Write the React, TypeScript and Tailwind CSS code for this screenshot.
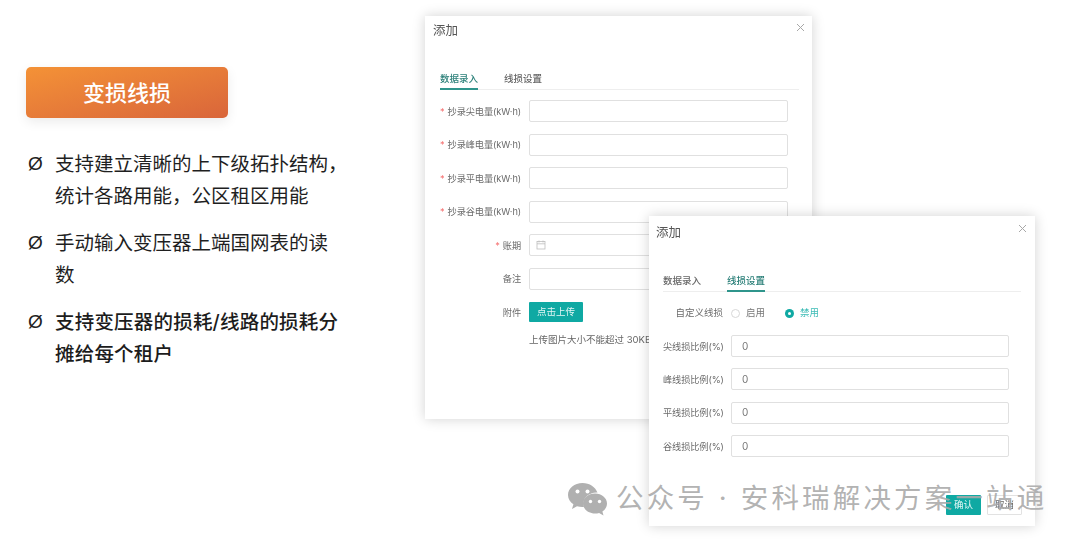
const cjk = "font-['Inter','Noto_Sans_CJK_SC',sans-serif]";

function Field({ label, req, w, children }: { label: string; req?: boolean; w: string; children?: React.ReactNode }) {
  return (
    <div className="flex h-[22px] items-center">
      <div className={`${w} shrink-0 whitespace-nowrap pr-2 pt-px text-right text-[9.2px] tracking-[-0.1px] text-[#6b6b6b]`}>
        {req && <span className="mr-[3px] text-[#f56c6c]">*</span>}
        {label}
      </div>
      {children}
    </div>
  );
}

function Input({ value, w = "w-[259px]" }: { value?: string; w?: string }) {
  return (
    <div className={`${w} flex h-[22px] shrink-0 items-center rounded-[2px] border border-[#e0e0e0] bg-white pl-[10px] text-[10px] text-[#777]`}>
      {value}
    </div>
  );
}

function Header({ second }: { second?: boolean }) {
  return (
    <div className={second ? "flex items-start justify-between pl-[7px] pr-[8px] pt-[8px]" : "flex items-start justify-between pl-2 pr-[7px] pt-[6px]"}>
      <span className="text-[12.5px] leading-[18px] text-[#555]">添加</span>
      <svg width="9" height="9" viewBox="0 0 9 9" className={second ? "mt-0" : "mt-px"} stroke="#a8a8a8" strokeWidth="1">
        <path d="M1 1l7 7M8 1l-7 7" />
      </svg>
    </div>
  );
}

function Tabs({ active }: { active: number }) {
  const tabs = ["数据录入", "线损设置"];
  return (
    <div className="flex h-[23px] gap-[26px] border-b border-[#eeeeee] text-[9.5px]">
      {tabs.map((t, i) => (
        <div
          key={t}
          className={
            i === active
              ? "-mb-px h-[23px] border-b-2 border-[#2f958c] pt-[5px] font-medium text-[#2a7f78]"
              : "h-[23px] pt-[5px] font-medium text-[#666]"
          }
        >
          {t}
        </div>
      ))}
    </div>
  );
}

function Calendar() {
  return (
    <svg width="10" height="10" viewBox="0 0 10 10" fill="none" stroke="#bdbdbd" strokeWidth="0.8">
      <rect x="1" y="1.5" width="8" height="7.5" />
      <path d="M1 3.8h8M3 .5v2M7 .5v2" />
    </svg>
  );
}

function FirstDialog() {
  return (
    <section className="absolute left-[425px] top-[16px] h-[403px] w-[387px] bg-white shadow-[0_0_12px_rgba(0,0,0,0.18)] blur-[0.4px]">
      <Header />
      <div className="mx-[15px] mt-[27px] w-[359px]">
        <Tabs active={0} />
      </div>
      <div className="ml-[15px] mt-[10px] flex flex-col gap-[11.5px]">
        <Field label="抄录尖电量(kW·h)" req w="w-[89px]"><Input /></Field>
        <Field label="抄录峰电量(kW·h)" req w="w-[89px]"><Input /></Field>
        <Field label="抄录平电量(kW·h)" req w="w-[89px]"><Input /></Field>
        <Field label="抄录谷电量(kW·h)" req w="w-[89px]"><Input /></Field>
        <Field label="账期" req w="w-[89px]">
          <div className="flex h-[22px] w-[259px] items-center rounded-[2px] border border-[#e0e0e0] pl-[6px]"><Calendar /></div>
        </Field>
        <Field label="备注" w="w-[89px]"><Input /></Field>
        <Field label="附件" w="w-[89px]">
          <div className="flex h-[20px] w-[54px] items-center justify-center rounded-[1px] bg-[#0fa9a3] text-[9.5px] text-[#e4f7f5]">点击上传</div>
        </Field>
      </div>
      <p className="ml-[104px] mt-[10px] whitespace-nowrap text-[9.5px] text-[#666]">上传图片大小不能超过 30KB!</p>
    </section>
  );
}

function SecondDialog() {
  return (
    <section className="absolute left-[649px] top-[216px] h-[310px] w-[386px] bg-white shadow-[0_0_12px_rgba(0,0,0,0.18)] blur-[0.4px]">
      <Header second />
      <div className="mx-[14px] mt-[27px] w-[358px]">
        <Tabs active={1} />
      </div>
      <div className="ml-[14px] mt-[11px] flex h-[20px] items-center">
        <div className="w-[68px] shrink-0 pr-[8px] text-right text-[9.5px] text-[#6b6b6b]">自定义线损</div>
        <span className="h-[9px] w-[9px] rounded-full border border-[#d8d8d8]" />
        <span className="ml-[6px] text-[9.5px] text-[#777]">启用</span>
        <span className="ml-[20px] flex h-[9px] w-[9px] items-center justify-center rounded-full bg-[#0fa9a3]">
          <span className="h-[3px] w-[3px] rounded-full bg-white" />
        </span>
        <span className="ml-[6px] text-[9.5px] text-[#3dbcb6]">禁用</span>
      </div>
      <div className="ml-[14px] mt-[12px] flex flex-col gap-[11.4px]">
        {["尖线损比例(%)", "峰线损比例(%)", "平线损比例(%)", "谷线损比例(%)"].map((l) => (
          <Field key={l} label={l} w="w-[68px]"><Input value="0" w="w-[278px]" /></Field>
        ))}
      </div>
      <div className="mr-[13px] mt-[38px] flex justify-end gap-[6px]">
        <div className="flex h-[20px] w-[35px] items-center justify-center rounded-[1px] bg-[#0fa9a3] text-[9.5px] text-[#e4f7f5]">确认</div>
        <div className="flex h-[20px] w-[35px] items-center justify-center rounded-[1px] border border-[#e2e2e2] text-[9.5px] text-[#666]">取消</div>
      </div>
    </section>
  );
}

function Watermark() {
  return (
    <div className="absolute left-[567px] top-[479px] flex h-[40px] items-center whitespace-nowrap text-[27.5px] tracking-[3.15px] text-[#a9a9a9]/90">
      <svg width="41" height="34" viewBox="0 0 41 34" fill="#b0b0b0" className="mr-[8px]">
        <path d="M15.5 1C7.5 1 1 6.4 1 13c0 3.8 2.1 7 5.4 9.300L5 27l5-2.800c1.700.5 3.500.8 5.400.8.500 0 1 0 1.500-.1-.3-1-.5-2-.5-3.100 0-6.200 5.800-11.200 13-11.200h1.100C28.600 5.200 22.600 1 15.500 1z" />
        <path d="M40 21.500c0-5.500-5.300-10-12-10s-12 4.500-12 10 5.300 10 12 10c1.500 0 2.800-.2 4.100-.6L36.500 33.500l-1.100-3.900C38.200 27.700 40 24.800 40 21.500z" />
        <circle cx="10.500" cy="9.500" r="2" fill="#fff" />
        <circle cx="20.500" cy="9.500" r="2" fill="#fff" />
        <circle cx="23.500" cy="19.500" r="1.700" fill="#fff" />
        <circle cx="32.500" cy="19.500" r="1.700" fill="#fff" />
      </svg>
      <span>公众号 · 安科瑞解决方案一站通</span>
    </div>
  );
}

function Bullet({ lines, strong }: { lines: string[]; strong?: boolean }) {
  return (
    <li className="flex">
      <span className="w-[27px] shrink-0 font-['Liberation_Sans',sans-serif] text-[19px] text-[#222]">Ø</span>
      <span className={strong ? "font-medium tracking-[0.2px] text-[#1c1c1c]" : "text-[#1f1f1f]"}>
        {lines.map((l) => (
          <span key={l} className="block whitespace-nowrap">{l}</span>
        ))}
      </span>
    </li>
  );
}

export default function App() {
  return (
    <main className={`relative h-[541px] w-[1080px] overflow-hidden bg-white ${cjk}`}>
      <div className="pl-[26px] pt-[67px]">
        <div className="flex h-[51px] w-[202px] items-center justify-center rounded-[5px] bg-gradient-to-br from-[#f49236] to-[#d9653a] pt-px text-[22px] font-medium text-white shadow-[0_4px_12px_rgba(0,0,0,0.08)]">
          变损线损
        </div>
        <ul className="ml-[2px] mt-[30px] flex flex-col gap-[15px] text-[19.5px] leading-[32px]">
          <Bullet lines={["支持建立清晰的上下级拓扑结构，", "统计各路用能，公区租区用能"]} />
          <Bullet lines={["手动输入变压器上端国网表的读", "数"]} />
          <Bullet lines={["支持变压器的损耗/线路的损耗分", "摊给每个租户"]} strong />
        </ul>
      </div>
      <FirstDialog />
      <SecondDialog />
      <Watermark />
    </main>
  );
}
